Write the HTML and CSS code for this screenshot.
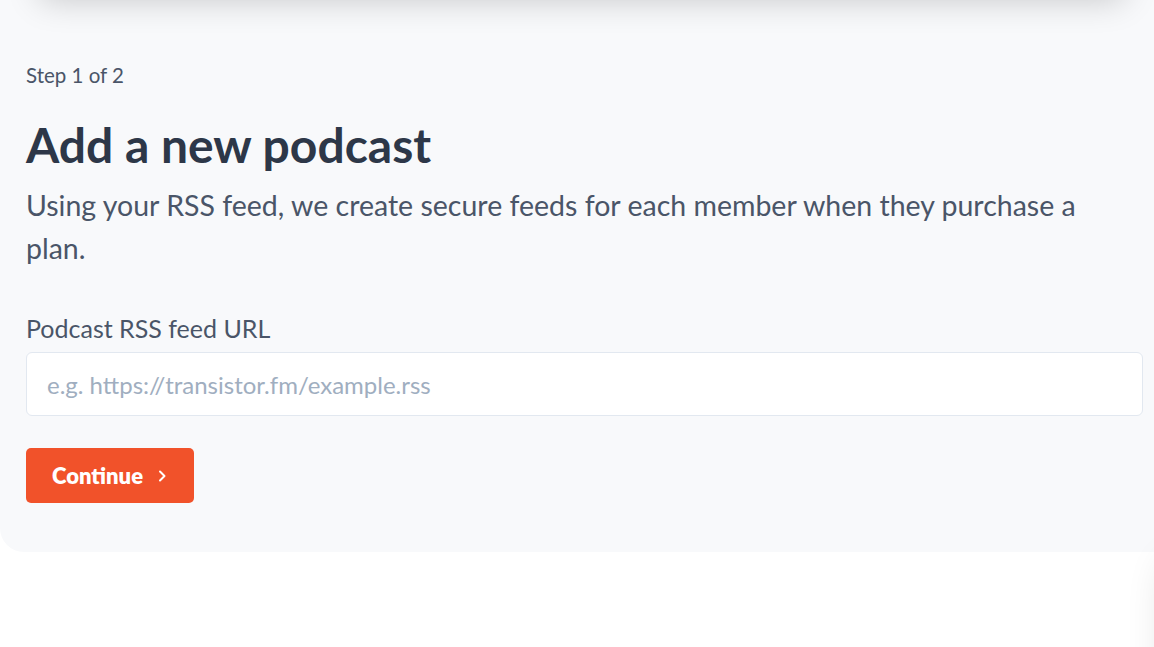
FILE: index.html
```html
<!DOCTYPE html>
<html lang="en">
<head>
    <meta charset="UTF-8">
    <meta name="viewport" content="width=device-width, initial-scale=1.0">
    <title>Add a new podcast</title>
    <link rel="stylesheet" href="styles.css">
</head>
<body>
    <div class="top-card"></div>
    <section class="panel">
        <p class="step">Step 1 of 2</p>
        <h1>Add a new podcast</h1>
        <p class="lead">Using your RSS feed, we create secure feeds for each member when they purchase a plan.</p>
        <form class="feed-form">
            <label for="feedUrl">Podcast RSS feed URL</label>
            <input type="text" id="feedUrl" placeholder="e.g. https://transistor.fm/example.rss">
            <button type="submit">
                Continue
                <svg width="10" height="14" viewBox="0 0 10 14" fill="none" stroke="currentColor" stroke-width="2" stroke-linecap="round" stroke-linejoin="round"><path d="M3 2.5l4.5 4.5-4.5 4.5"/></svg>
            </button>
        </form>
    </section>
    <div class="side-card"></div>
</body>
</html>
```
FILE: styles.css
```css
body {
    margin: 0;
    background: #fff;
    font-family: 'Lato', sans-serif;
    overflow: hidden;
    position: relative;
    height: 647px;
}

.top-card {
    position: absolute;
    top: -100px;
    left: 40px;
    right: 30px;
    height: 100px;
    background: #fff;
    box-shadow: 0 0 32px rgba(0, 0, 0, 0.2);
    z-index: 2;
}

.side-card {
    position: absolute;
    top: 560px;
    left: 1168px;
    width: 200px;
    height: 200px;
    border-radius: 20px;
    background: #fff;
    box-shadow: 0 0 40px rgba(0, 0, 0, 0.16);
}

.panel {
    background: #f8f9fb;
    margin-right: -40px;
    padding: 63px 51px 49px 26px;
    border-radius: 0 0 0 24px;
}

.step {
    margin: 0;
    font-size: 20.5px;
    line-height: 24px;
    color: #4a5568;
}

h1 {
    margin: 30px 0 0;
    font-size: 48px;
    font-weight: 700;
    line-height: 56px;
    color: #2d3748;
}

.lead {
    margin: 11px 0 0;
    font-size: 28.5px;
    line-height: 43px;
    color: #4a5568;
    padding-right: 30px;
}

.feed-form {
    display: flex;
    flex-direction: column;
    align-items: flex-start;
    margin-top: 44px;
}

.feed-form label {
    font-size: 25px;
    line-height: 28px;
    color: #4a5568;
    margin-bottom: 10px;
}

.feed-form input {
    box-sizing: border-box;
    width: 100%;
    height: 64px;
    padding: 0 20px;
    border: 1px solid #e2e8f0;
    border-radius: 6px;
    background: #fff;
    font-family: 'Lato', sans-serif;
    font-size: 24px;
    color: #2d3748;
    outline: none;
}

.feed-form input::placeholder {
    color: #a0aec0;
}

.feed-form button {
    margin-top: 32px;
    display: flex;
    align-items: center;
    gap: 14px;
    height: 55px;
    width: 168px;
    padding: 0 26px;
    border: none;
    border-radius: 5px;
    background: #f1522a;
    color: #fff;
    font-family: 'Lato', sans-serif;
    font-size: 22px;
    font-weight: 800;
    cursor: pointer;
}
```
